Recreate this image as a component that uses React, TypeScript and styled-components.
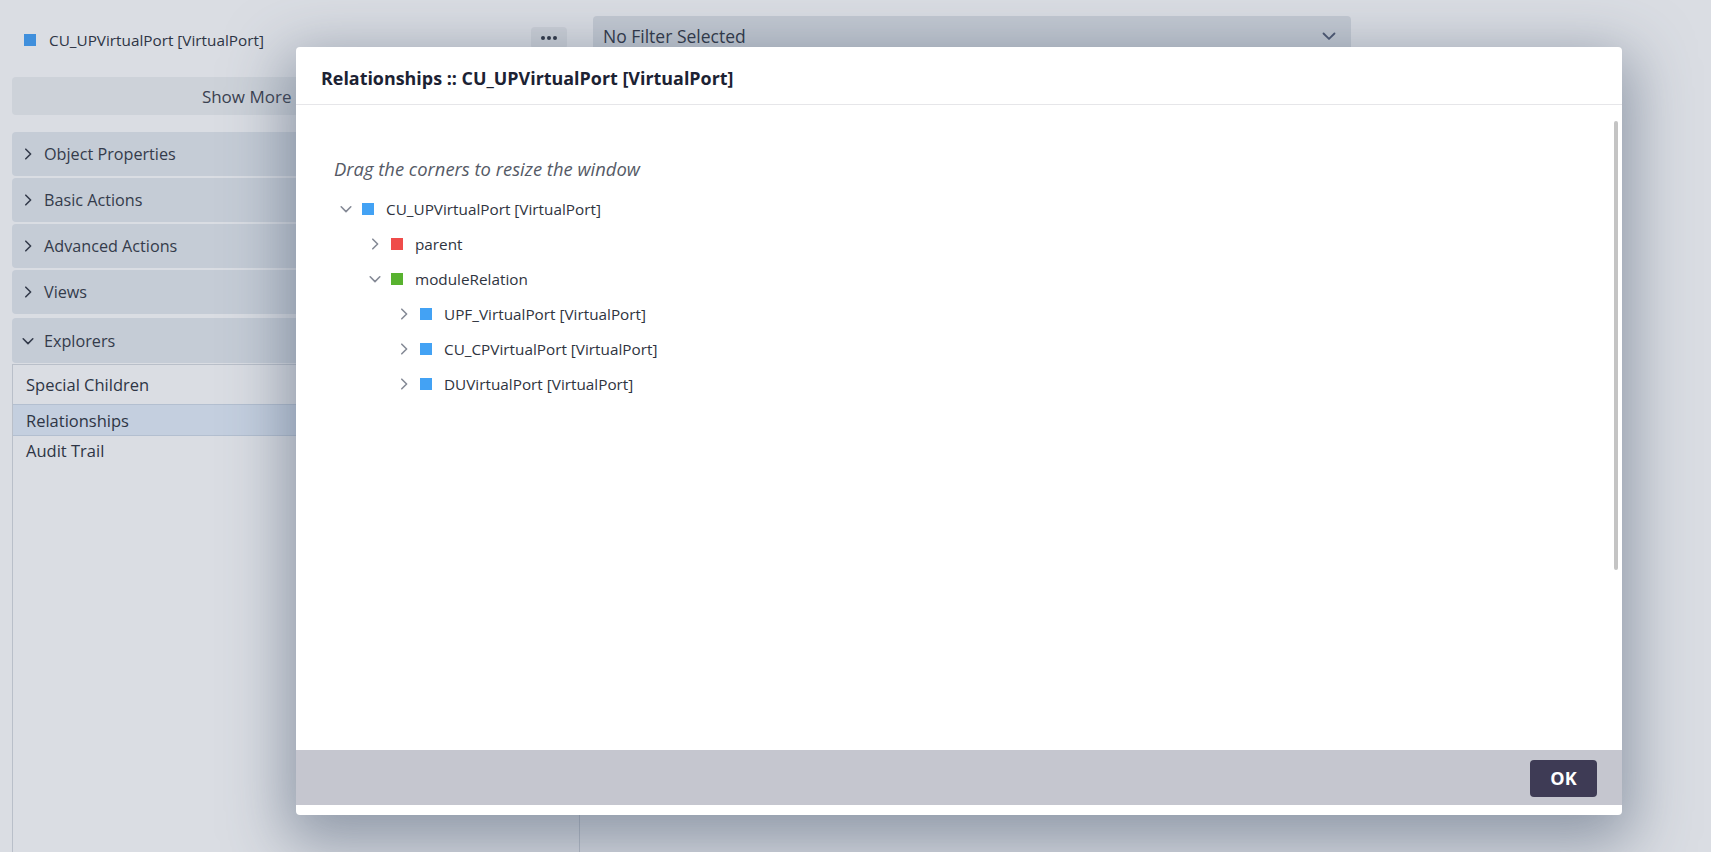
import React from "react";
import styled, { createGlobalStyle } from "styled-components";

const Global = createGlobalStyle`
  html, body { margin: 0; padding: 0; }
  body {
    width: 1711px; height: 852px; overflow: hidden;
    background: #dadde3;
    font-family: "Open Sans", "Lato", sans-serif;
    color: #2e3545;
  }
  * { box-sizing: border-box; }
`;

const Page = styled.div`
  position: relative;
  width: 1711px;
  height: 852px;
  display: flex;
  padding: 16px 0 0 12px;
  gap: 13px;
`;

const LeftPanel = styled.div`
  width: 568px;
  display: flex;
  flex-direction: column;
`;

const ObjectHeader = styled.div`
  display: flex;
  align-items: center;
  height: 47px;
  padding: 0 13px 0 12px;
  gap: 13px;
  font-size: 15.3px;
  color: #2e3545;
`;

const Square = styled.span<{ $c: string }>`
  width: 12px;
  height: 12px;
  flex: none;
  background: ${(p) => p.$c};
`;

const Grow = styled.span`
  flex: 1;
`;

const DotsButton = styled.button`
  width: 36px;
  height: 22px;
  border: 0;
  border-radius: 4px;
  background: #cdd1d8;
  display: flex;
  align-items: center;
  justify-content: center;
  gap: 2px;
  padding: 0;
  margin-top: -4px;
`;

const Dot = styled.span`
  width: 4px;
  height: 4px;
  border-radius: 50%;
  background: #2e3545;
`;

const ShowMore = styled.div`
  margin-top: 14px;
  height: 38px;
  border-radius: 4px;
  background: #cdd2d9;
  display: flex;
  align-items: center;
  justify-content: center;
  font-size: 17px;
  color: #3a4150;
`;

const Accordion = styled.div`
  margin-top: 17px;
  display: flex;
  flex-direction: column;
  gap: 2px;
`;

const AccHeader = styled.div<{ $h?: number; $gapTop?: number }>`
  height: ${(p) => p.$h ?? 44}px;
  margin-top: ${(p) => p.$gapTop ?? 0}px;
  border-radius: 4px;
  background: #c5ccd6;
  display: flex;
  align-items: center;
  padding-left: 9px;
  gap: 9px;
  font-size: 16.2px;
  color: #343b4b;
`;

const ListBox = styled.div`
  margin-top: 1px;
  flex: 1;
  border: 1px solid #b9bfc9;
  border-bottom: 0;
  display: flex;
  flex-direction: column;
`;

const ListRow = styled.div<{ $active?: boolean; $h: number }>`
  height: ${(p) => p.$h}px;
  display: flex;
  align-items: center;
  padding-left: 13px;
  font-size: 16.5px;
  color: #2e3545;
  background: ${(p) => (p.$active ? "#c4cfdf" : "transparent")};
  border-top: ${(p) => (p.$active ? "1px solid #b3bfd0" : "0")};
  border-bottom: ${(p) => (p.$active ? "1px solid #b3bfd0" : "0")};
`;

const RightArea = styled.div`
  width: 758px;
`;

const FilterSelect = styled.div`
  height: 39px;
  border-radius: 4px;
  background: #c3c9d2;
  display: flex;
  align-items: center;
  padding: 0 14px 0 10px;
  font-size: 17.5px;
  color: #2e3545;
`;

const Backdrop = styled.div`
  position: absolute;
  inset: 0;
  display: flex;
  padding: 47px 0 0 296px;
`;

const Modal = styled.div`
  position: relative;
  width: 1326px;
  height: 768px;
  background: #fff;
  border-radius: 4px;
  box-shadow: 0 18px 60px 10px rgba(70, 85, 110, 0.5);
  display: flex;
  flex-direction: column;
  padding-bottom: 10px;
`;

const ModalHeader = styled.div`
  height: 58px;
  flex: none;
  border-bottom: 1px solid #e6e6e9;
  display: flex;
  align-items: center;
  padding: 4px 25px 0;
  font-size: 17.9px;
  font-weight: 700;
  color: #1c2233;
`;

const ModalBody = styled.div`
  flex: 1;
  padding: 48px 0 0 38px;
  display: flex;
  flex-direction: column;
`;

const ScrollThumb = styled.div`
  position: absolute;
  right: 4px;
  top: 74px;
  width: 4px;
  height: 449px;
  background: #c4c4c4;
  border-radius: 2px;
`;

const Hint = styled.div`
  font-style: italic;
  font-size: 18.4px;
  color: #555a66;
  height: 30px;
  display: flex;
  align-items: center;
`;

const Tree = styled.div`
  margin-top: 8px;
  display: flex;
  flex-direction: column;
`;

const TreeRow = styled.div<{ $level: number }>`
  height: 35px;
  display: flex;
  align-items: center;
  padding-left: ${(p) => 3 + p.$level * 29}px;
  font-size: 15.3px;
  color: #2f3440;
`;

const Twisty = styled.span`
  width: 18px;
  display: flex;
  align-items: center;
  justify-content: center;
  margin-right: 7px;
`;

const Label = styled.span`
  margin-left: 12px;
`;

const Footer = styled.div`
  height: 55px;
  flex: none;
  background: #c5c6cf;
  display: flex;
  align-items: center;
  justify-content: flex-end;
  padding-right: 25px;
`;

const OkButton = styled.button`
  width: 67px;
  height: 37px;
  border: 0;
  border-radius: 4px;
  background: #3e3b55;
  color: #fff;
  font-family: "Open Sans", sans-serif;
  font-weight: 700;
  font-size: 18px;
  margin-top: 1px;
`;

const Chevron = ({ dir, color = "#858a96", size = 14 }: { dir: "right" | "down"; color?: string; size?: number }) => (
  <svg width={size} height={size} viewBox="0 0 14 14" fill="none">
    {dir === "right" ? (
      <path d="M4.8 2.2 L9.6 7 L4.8 11.8" stroke={color} strokeWidth="1.6" strokeLinecap="round" strokeLinejoin="round" />
    ) : (
      <path d="M2.2 4.8 L7 9.6 L11.8 4.8" stroke={color} strokeWidth="1.6" strokeLinecap="round" strokeLinejoin="round" />
    )}
  </svg>
);

const tree: { level: number; open: boolean; color: string; label: string }[] = [
  { level: 0, open: true, color: "#43a2f4", label: "CU_UPVirtualPort [VirtualPort]" },
  { level: 1, open: false, color: "#ef4c4a", label: "parent" },
  { level: 1, open: true, color: "#58b22f", label: "moduleRelation" },
  { level: 2, open: false, color: "#43a2f4", label: "UPF_VirtualPort [VirtualPort]" },
  { level: 2, open: false, color: "#43a2f4", label: "CU_CPVirtualPort [VirtualPort]" },
  { level: 2, open: false, color: "#43a2f4", label: "DUVirtualPort [VirtualPort]" },
];

export default function App() {
  return (
    <>
      <Global />
      <Page>
        <LeftPanel>
          <ObjectHeader>
            <Square $c="#3f8fdc" />
            <Grow>CU_UPVirtualPort [VirtualPort]</Grow>
            <DotsButton>
              <Dot />
              <Dot />
              <Dot />
            </DotsButton>
          </ObjectHeader>
          <ShowMore>Show More Information</ShowMore>
          <Accordion>
            {["Object Properties", "Basic Actions", "Advanced Actions", "Views"].map((t) => (
              <AccHeader key={t}>
                <Chevron dir="right" color="#343b4b" />
                {t}
              </AccHeader>
            ))}
            <AccHeader $h={45} $gapTop={2}>
              <Chevron dir="down" color="#343b4b" />
              Explorers
            </AccHeader>
          </Accordion>
          <ListBox>
            <ListRow $h={39}>Special Children</ListRow>
            <ListRow $h={32} $active>
              Relationships
            </ListRow>
            <ListRow $h={29}>Audit Trail</ListRow>
          </ListBox>
        </LeftPanel>
        <RightArea>
          <FilterSelect>
            <Grow>No Filter Selected</Grow>
            <Chevron dir="down" color="#4a5570" size={16} />
          </FilterSelect>
        </RightArea>
        <Backdrop>
          <Modal>
            <ModalHeader>Relationships :: CU_UPVirtualPort [VirtualPort]</ModalHeader>
            <ModalBody>
              <Hint>Drag the corners to resize the window</Hint>
              <Tree>
                {tree.map((n) => (
                  <TreeRow key={n.label} $level={n.level}>
                    <Twisty>
                      <Chevron dir={n.open ? "down" : "right"} />
                    </Twisty>
                    <Square $c={n.color} />
                    <Label>{n.label}</Label>
                  </TreeRow>
                ))}
              </Tree>
            </ModalBody>
            <ScrollThumb />
            <Footer>
              <OkButton>OK</OkButton>
            </Footer>
          </Modal>
        </Backdrop>
      </Page>
    </>
  );
}
